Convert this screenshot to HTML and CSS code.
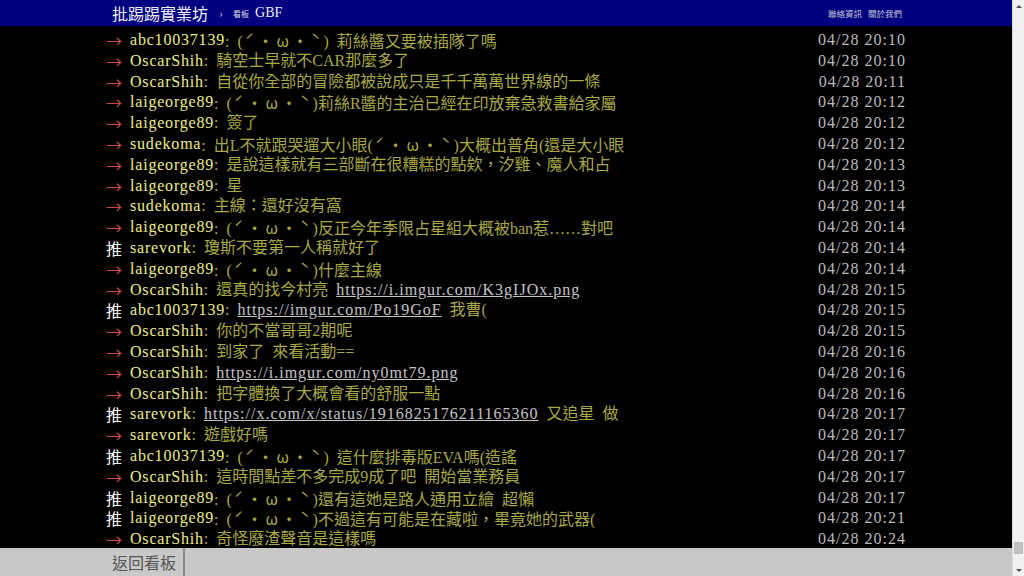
FILE: index.html
```html
<!DOCTYPE html>
<html lang="zh-Hant-TW">

<head>
    <meta charset="UTF-8">
    <title>GBF - 批踢踢實業坊</title>
    <link rel="stylesheet" href="styles.css">
</head>

<body>
    <div class="page">
        <div class="screen">
            <!-- top bar -->
            <div id="topbar-container">
                <div class="bbs-content topbar">
                    <a class="logo" href="#">批踢踢實業坊</a>
                    <span class="crumb">›</span>
                    <span class="board-label">看板</span>
                    <a class="board" href="#">GBF</a>
                    <span class="right">
                        <a href="#">聯絡資訊</a>
                        <a href="#">關於我們</a>
                    </span>
                </div>
            </div>

            <div id="main-container">
                <div class="bbs-content pushes">
                    <div class="push"><span class="push-tag arrow">→</span><span class="push-userid">abc10037139</span><span class="push-content">: (<span class="kao">ˊ・ω・ˋ</span>) 莉絲醬又要被插隊了嗎</span><span class="push-ipdatetime">04/28 20:10</span></div>
                    <div class="push"><span class="push-tag arrow">→</span><span class="push-userid">OscarShih</span><span class="push-content">: 騎空士早就不CAR那麼多了</span><span class="push-ipdatetime">04/28 20:10</span></div>
                    <div class="push"><span class="push-tag arrow">→</span><span class="push-userid">OscarShih</span><span class="push-content">: 自從你全部的冒險都被說成只是千千萬萬世界線的一條</span><span class="push-ipdatetime">04/28 20:11</span></div>
                    <div class="push"><span class="push-tag arrow">→</span><span class="push-userid">laigeorge89</span><span class="push-content">: (<span class="kao">ˊ・ω・ˋ</span>)莉絲R醬的主治已經在印放棄急救書給家屬</span><span class="push-ipdatetime">04/28 20:12</span></div>
                    <div class="push"><span class="push-tag arrow">→</span><span class="push-userid">laigeorge89</span><span class="push-content">: 簽了</span><span class="push-ipdatetime">04/28 20:12</span></div>
                    <div class="push"><span class="push-tag arrow">→</span><span class="push-userid">sudekoma</span><span class="push-content">: 出L不就跟哭遛大小眼(<span class="kao">ˊ・ω・ˋ</span>)大概出普角(還是大小眼</span><span class="push-ipdatetime">04/28 20:12</span></div>
                    <div class="push"><span class="push-tag arrow">→</span><span class="push-userid">laigeorge89</span><span class="push-content">: 是說這樣就有三部斷在很糟糕的點欸，汐雞、魔人和占</span><span class="push-ipdatetime">04/28 20:13</span></div>
                    <div class="push"><span class="push-tag arrow">→</span><span class="push-userid">laigeorge89</span><span class="push-content">: 星</span><span class="push-ipdatetime">04/28 20:13</span></div>
                    <div class="push"><span class="push-tag arrow">→</span><span class="push-userid">sudekoma</span><span class="push-content">: 主線：還好沒有窩</span><span class="push-ipdatetime">04/28 20:14</span></div>
                    <div class="push"><span class="push-tag arrow">→</span><span class="push-userid">laigeorge89</span><span class="push-content">: (<span class="kao">ˊ・ω・ˋ</span>)反正今年季限占星組大概被ban惹……對吧</span><span class="push-ipdatetime">04/28 20:14</span></div>
                    <div class="push"><span class="push-tag">推</span><span class="push-userid">sarevork</span><span class="push-content">: 瓊斯不要第一人稱就好了</span><span class="push-ipdatetime">04/28 20:14</span></div>
                    <div class="push"><span class="push-tag arrow">→</span><span class="push-userid">laigeorge89</span><span class="push-content">: (<span class="kao">ˊ・ω・ˋ</span>)什麼主線</span><span class="push-ipdatetime">04/28 20:14</span></div>
                    <div class="push"><span class="push-tag arrow">→</span><span class="push-userid">OscarShih</span><span class="push-content">: 還真的找今村亮 <a href="#">https://i.imgur.com/K3gIJOx.png</a></span><span class="push-ipdatetime">04/28 20:15</span></div>
                    <div class="push"><span class="push-tag">推</span><span class="push-userid">abc10037139</span><span class="push-content">: <a href="#">https://imgur.com/Po19GoF</a> 我曹(</span><span class="push-ipdatetime">04/28 20:15</span></div>
                    <div class="push"><span class="push-tag arrow">→</span><span class="push-userid">OscarShih</span><span class="push-content">: 你的不當哥哥2期呢</span><span class="push-ipdatetime">04/28 20:15</span></div>
                    <div class="push"><span class="push-tag arrow">→</span><span class="push-userid">OscarShih</span><span class="push-content">: 到家了 來看活動==</span><span class="push-ipdatetime">04/28 20:16</span></div>
                    <div class="push"><span class="push-tag arrow">→</span><span class="push-userid">OscarShih</span><span class="push-content">: <a href="#">https://i.imgur.com/ny0mt79.png</a></span><span class="push-ipdatetime">04/28 20:16</span></div>
                    <div class="push"><span class="push-tag arrow">→</span><span class="push-userid">OscarShih</span><span class="push-content">: 把字體換了大概會看的舒服一點</span><span class="push-ipdatetime">04/28 20:16</span></div>
                    <div class="push"><span class="push-tag">推</span><span class="push-userid">sarevork</span><span class="push-content">: <a href="#">https://x.com/x/status/1916825176211165360</a> 又追星 做</span><span class="push-ipdatetime">04/28 20:17</span></div>
                    <div class="push"><span class="push-tag arrow">→</span><span class="push-userid">sarevork</span><span class="push-content">: 遊戲好嗎</span><span class="push-ipdatetime">04/28 20:17</span></div>
                    <div class="push"><span class="push-tag">推</span><span class="push-userid">abc10037139</span><span class="push-content">: (<span class="kao">ˊ・ω・ˋ</span>) 這什麼排毒版EVA嗎(造謠</span><span class="push-ipdatetime">04/28 20:17</span></div>
                    <div class="push"><span class="push-tag arrow">→</span><span class="push-userid">OscarShih</span><span class="push-content">: 這時間點差不多完成9成了吧 開始當業務員</span><span class="push-ipdatetime">04/28 20:17</span></div>
                    <div class="push"><span class="push-tag">推</span><span class="push-userid">laigeorge89</span><span class="push-content">: (<span class="kao">ˊ・ω・ˋ</span>)還有這她是路人通用立繪 超懶</span><span class="push-ipdatetime">04/28 20:17</span></div>
                    <div class="push"><span class="push-tag">推</span><span class="push-userid">laigeorge89</span><span class="push-content">: (<span class="kao">ˊ・ω・ˋ</span>)不過這有可能是在藏啦，畢竟她的武器(</span><span class="push-ipdatetime">04/28 20:21</span></div>
                    <div class="push"><span class="push-tag arrow">→</span><span class="push-userid">OscarShih</span><span class="push-content">: 奇怪廢渣聲音是這樣嗎</span><span class="push-ipdatetime">04/28 20:24</span></div>
                </div>
            </div>

            <!-- bottom navigation -->
            <div id="navigation-container">
                <div class="bbs-content navigation">
                    <a class="board-btn" href="#">返回看板</a>
                </div>
            </div>
        </div>

        <!-- fake scrollbar (page is scrolled to the bottom) -->
        <div class="scrollbar">
            <span class="sb-up"></span>
            <span class="sb-track"><span class="sb-thumb"></span></span>
            <span class="sb-down"></span>
        </div>
    </div>
</body>

</html>
```

FILE: styles.css
```css
/* General Body Styling */
body {
    margin: 0;
    padding: 0;
    background-color: #000;
    overflow: hidden;
    font-family: 'Liberation Serif', 'Noto Sans CJK TC', serif;
}

a {
    text-decoration: none;
}

.page {
    display: flex;
    width: 1024px;
    height: 576px;
}

.screen {
    flex: 1;
    display: flex;
    flex-direction: column;
    min-width: 0;
}

.bbs-content {
    width: 800px;
    margin: 0 auto;
    box-sizing: border-box;
}

/* Top bar */
#topbar-container {
    background-color: #000080;
    height: 26px;
    flex-shrink: 0;
}

.topbar {
    display: flex;
    align-items: center;
    height: 26px;
    padding: 0 4px 0 6px;
}

.topbar .logo {
    color: #f0f0f0;
    font-size: 16px;
    margin-right: 11px;
}

.topbar .crumb {
    color: #bbb;
    font-size: 12px;
    margin-right: 10px;
}

.topbar .board-label {
    color: #ddd;
    font-size: 8px;
    margin-right: 6px;
}

.topbar .board {
    color: #eee;
    font-size: 14px;
}

.topbar .right {
    margin-left: auto;
    display: flex;
    gap: 6px;
}

.topbar .right a {
    color: #c8c8d8;
    font-size: 8.5px;
}

/* Push list */
#main-container {
    flex: 1;
    overflow: hidden;
    display: flex;
    flex-direction: column;
    justify-content: flex-end;
}

.pushes {
    margin-bottom: -2px;
}

.push {
    display: flex;
    font-size: 16px;
    line-height: 20.8px;
    height: 20.8px;
    white-space: pre;
    word-spacing: 4px;
}

.push-tag {
    width: 24px;
    flex-shrink: 0;
    color: #fff;
    font-family: 'Noto Sans CJK TC', sans-serif;
}

.push-tag.arrow {
    color: #c84a4a;
}

.push-userid {
    color: #eeee88;
    letter-spacing: 0.8px;
}

.push-content {
    flex: 1;
    color: #a8a844;
    overflow: hidden;
}

.push-content .kao {
    font-family: 'Noto Sans CJK TC', sans-serif;
    letter-spacing: 3px;
    margin-left: 2px;
}

.push-content a {
    color: #c4c4c4;
    text-decoration: underline;
    letter-spacing: 1px;
}

.push-ipdatetime {
    color: #bbb;
    letter-spacing: 1px;
    word-spacing: 0;
}

/* Bottom navigation */
#navigation-container {
    background-color: #c8c8c8;
    height: 28px;
    flex-shrink: 0;
}

.navigation {
    display: flex;
    height: 28px;
}

.board-btn {
    color: #555;
    font-size: 16px;
    line-height: 28px;
    padding: 0 7px 0 6px;
    border-right: 2px solid #888;
    font-family: 'Noto Sans CJK TC', sans-serif;
}

/* Fake scrollbar */
.scrollbar {
    width: 11px;
    flex-shrink: 0;
    background-color: #f0f0f0;
    display: flex;
    flex-direction: column;
    border-left: 1px solid #dcdcdc;
}

.sb-up,
.sb-down {
    height: 12px;
    display: flex;
    align-items: center;
    justify-content: center;
}

.sb-up::after {
    content: "";
    border-left: 3px solid transparent;
    border-right: 3px solid transparent;
    border-bottom: 3px solid #505050;
}

.sb-down::after {
    content: "";
    border-left: 3px solid transparent;
    border-right: 3px solid transparent;
    border-top: 3px solid #505050;
}

.sb-track {
    flex: 1;
    display: flex;
    flex-direction: column;
    justify-content: flex-end;
    padding: 0 1px 10px;
}

.sb-thumb {
    height: 12px;
    background-color: #c0c0c0;
}
```
